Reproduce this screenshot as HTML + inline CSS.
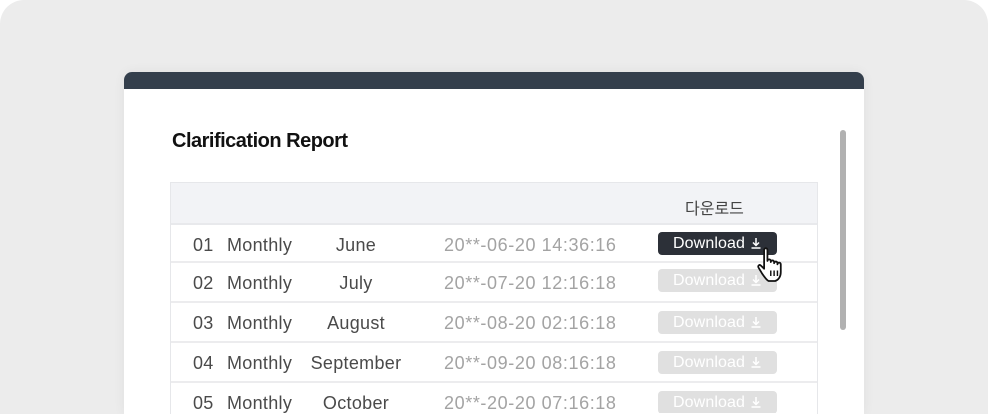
<!DOCTYPE html>
<html><head><meta charset="utf-8"><style>
*{margin:0;padding:0;box-sizing:border-box}
html,body{width:988px;height:414px;overflow:hidden}
body{background:#fff;font-family:"Liberation Sans","Noto Sans CJK KR",sans-serif;position:relative}
.frame{position:absolute;left:0;top:0;width:988px;height:414px;background:#ececec;border-radius:24px 24px 0 0}
.card{position:absolute;left:124px;top:72px;width:740px;height:342px;background:#fff;border-radius:8px 8px 0 0;overflow:hidden;box-shadow:0 0 12px rgba(0,0,0,0.06)}
.bar{position:absolute;left:0;top:0;width:740px;height:17px;background:#343f4c}
.title{position:absolute;left:48px;top:58px;font-size:20px;font-weight:bold;color:#111;letter-spacing:-0.5px}
.scroll{position:absolute;left:716px;top:58px;width:6px;height:200px;background:#b1b1b1;border-radius:3px}
.tbl{position:absolute;left:46px;top:110px;width:648px;height:232px;border:1px solid #e6e7ea;border-bottom:none}
.head{position:absolute;left:0;top:0;width:646px;height:42px;background:#f2f3f6;border-bottom:2px solid #e8e9ec}
.head span{position:absolute;left:514px;top:12px;font-size:16px;color:#444}
.row{position:absolute;left:0;width:646px;height:40px;border-bottom:2px solid #ececee;font-size:18px;color:#4a4a4a;letter-spacing:0.3px}
.row span{position:absolute;top:10px}
.n{left:22px}.m{left:56px}.mo{left:130px;width:110px;text-align:center}.d{left:273px;color:#a3a3a3;letter-spacing:0.6px}
.btn{position:absolute;left:487px;top:6px;width:119px;height:23px;border-radius:4px;background:#e0e0e0;color:#fff;font-size:16px;line-height:23px;text-align:center;letter-spacing:0.1px}
.btn.on{background:#2c3038}
.btn svg{vertical-align:-1px;margin-left:5px}
</style></head><body>
<div class="frame"></div>
<div class="card">
<div class="bar"></div>
<div class="title">Clarification Report</div>
<div class="scroll"></div>
<div class="tbl">
<div class="head"><span>다운로드</span></div>
<div class="row" style="top:42px;height:38px"><span class="n">01</span><span class="m">Monthly</span><span class="mo">June</span><span class="d">20**-06-20 14:36:16</span><div class="btn on" style="top:7px">Download<svg width="12" height="12" viewBox="0 0 12 12"><path d="M6 1v7M3 5.5l3 3 3-3M1.5 11h9" stroke="#fff" stroke-width="1.5" fill="none"/></svg></div></div>
<div class="row" style="top:80px"><span class="n">02</span><span class="m">Monthly</span><span class="mo">July</span><span class="d">20**-07-20 12:16:18</span><div class="btn" style="top:6px">Download<svg width="12" height="12" viewBox="0 0 12 12"><path d="M6 1v7M3 5.5l3 3 3-3M1.5 11h9" stroke="#fff" stroke-width="1.5" fill="none"/></svg></div></div>
<div class="row" style="top:120px"><span class="n">03</span><span class="m">Monthly</span><span class="mo">August</span><span class="d">20**-08-20 02:16:18</span><div class="btn" style="top:8px">Download<svg width="12" height="12" viewBox="0 0 12 12"><path d="M6 1v7M3 5.5l3 3 3-3M1.5 11h9" stroke="#fff" stroke-width="1.5" fill="none"/></svg></div></div>
<div class="row" style="top:160px"><span class="n">04</span><span class="m">Monthly</span><span class="mo">September</span><span class="d">20**-09-20 08:16:18</span><div class="btn" style="top:8px">Download<svg width="12" height="12" viewBox="0 0 12 12"><path d="M6 1v7M3 5.5l3 3 3-3M1.5 11h9" stroke="#fff" stroke-width="1.5" fill="none"/></svg></div></div>
<div class="row" style="top:200px;height:30px;border-bottom:none;overflow:hidden"><span class="n">05</span><span class="m">Monthly</span><span class="mo">October</span><span class="d">20**-20-20 07:16:18</span><div class="btn" style="top:8px">Download<svg width="12" height="12" viewBox="0 0 12 12"><path d="M6 1v7M3 5.5l3 3 3-3M1.5 11h9" stroke="#fff" stroke-width="1.5" fill="none"/></svg></div></div>
</div>
</div>
<svg style="position:absolute;left:756px;top:246px" width="34" height="40" viewBox="0 0 30 36">
<path d="M7 3.5c0-2 3-2 3 0v10c0-2 3-2 3 0v1c0-2 3-2 3 0v1c0-2 3-2 3 0v1c0-2 3-2 3 0v7c0 4-2 7-5 8h-6c-2-1-4-4-6-7l-3-5c-1-2 1-3 2-2l3 3z" fill="#fff" stroke="#111" stroke-width="1.6" stroke-linejoin="round"/>
<path d="M13 22v5M16 22v5M19 22v5" stroke="#111" stroke-width="1.3"/>
</svg>
</body></html>
